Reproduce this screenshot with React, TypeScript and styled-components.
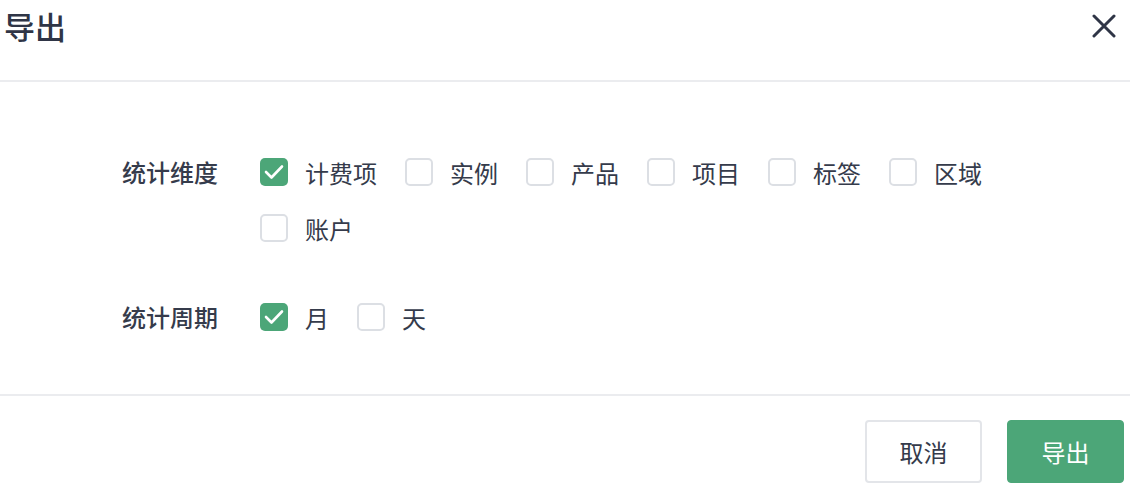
import styled, { createGlobalStyle } from 'styled-components';

const GlobalStyle = createGlobalStyle`
  body {
    margin: 0;
    background: #fff;
    font-family: "Noto Sans CJK SC", "Noto Sans", sans-serif;
    color: #353b4b;
  }
`;

const Dialog = styled.div`
  width: 1130px;
  height: 494px;
  display: flex;
  flex-direction: column;
  background: #fff;
`;

const Header = styled.div`
  height: 82px;
  flex-shrink: 0;
  display: flex;
  justify-content: space-between;
  align-items: flex-start;
  padding: 3px 13px 0 4px;
  box-sizing: border-box;
  border-bottom: 2px solid #ebecef;
`;

const Title = styled.h2`
  margin: 0;
  font-size: 31px;
  font-weight: 500;
  line-height: 46px;
  color: #2f3546;
`;

const Close = styled.button`
  border: 0;
  background: none;
  padding: 0;
  margin-top: 10px;
  width: 26px;
  height: 26px;
  cursor: pointer;
  display: flex;
  align-items: center;
  justify-content: center;
`;

const Body = styled.div`
  padding: 62px 0 0 122px;
  height: 314px;
  flex-shrink: 0;
  box-sizing: border-box;
  border-bottom: 2px solid #ebecef;
  display: flex;
  flex-direction: column;
  gap: 33px;
`;

const Row = styled.div`
  display: flex;
  align-items: flex-start;
`;

const Label = styled.div`
  width: 138px;
  flex-shrink: 0;
  font-size: 24px;
  font-weight: 500;
  line-height: 56px;
  color: #353b4b;
`;

const Options = styled.div`
  width: 760px;
  display: flex;
  flex-wrap: wrap;
`;

const Option = styled.label`
  display: flex;
  align-items: center;
  height: 56px;
  margin-right: 28px;
  font-size: 24px;
  color: #353b4b;
  cursor: pointer;
`;

const Box = styled.span<{ $checked: boolean }>`
  width: 28px;
  height: 28px;
  box-sizing: border-box;
  border-radius: 5px;
  margin-right: 17px;
  display: flex;
  align-items: center;
  justify-content: center;
  background: ${(p) => (p.$checked ? '#4ca678' : '#fff')};
  border: ${(p) => (p.$checked ? 'none' : '2px solid #dcdfe4')};
`;

const Footer = styled.div`
  display: flex;
  justify-content: flex-end;
  gap: 25px;
  padding: 24px 6px 0 0;
`;

const Button = styled.button<{ $primary?: boolean }>`
  width: 117px;
  height: 63px;
  border-radius: 4px;
  font-family: inherit;
  font-size: 24px;
  cursor: pointer;
  background: ${(p) => (p.$primary ? '#4ca678' : '#fff')};
  color: ${(p) => (p.$primary ? '#fff' : '#353b4b')};
  border: ${(p) => (p.$primary ? '1px solid #4ca678' : '2px solid #e3e5e9')};
`;

const dims = [
  { name: '计费项', checked: true },
  { name: '实例', checked: false },
  { name: '产品', checked: false },
  { name: '项目', checked: false },
  { name: '标签', checked: false },
  { name: '区域', checked: false },
  { name: '账户', checked: false },
];

const periods = [
  { name: '月', checked: true },
  { name: '天', checked: false },
];

function Check({ name, checked }: { name: string; checked: boolean }) {
  return (
    <Option>
      <Box $checked={checked}>
        {checked && (
          <svg width="20" height="16" viewBox="0 0 20 16">
            <polyline points="2,8 7.5,13.5 18,2.5" fill="none" stroke="#fff" strokeWidth="2.6" strokeLinecap="round" strokeLinejoin="round" />
          </svg>
        )}
      </Box>
      {name}
    </Option>
  );
}

export default function App() {
  return (
    <>
      <GlobalStyle />
      <Dialog>
        <Header>
          <Title>导出</Title>
          <Close aria-label="close">
            <svg width="24" height="24" viewBox="0 0 24 24">
              <path d="M2 2L22 22M22 2L2 22" stroke="#2f3546" strokeWidth="3" strokeLinecap="round" />
            </svg>
          </Close>
        </Header>
        <Body>
          <Row>
            <Label>统计维度</Label>
            <Options>
              {dims.map((d) => (
                <Check key={d.name} name={d.name} checked={d.checked} />
              ))}
            </Options>
          </Row>
          <Row>
            <Label>统计周期</Label>
            <Options>
              {periods.map((d) => (
                <Check key={d.name} name={d.name} checked={d.checked} />
              ))}
            </Options>
          </Row>
        </Body>
        <Footer>
          <Button>取消</Button>
          <Button $primary>导出</Button>
        </Footer>
      </Dialog>
    </>
  );
}
